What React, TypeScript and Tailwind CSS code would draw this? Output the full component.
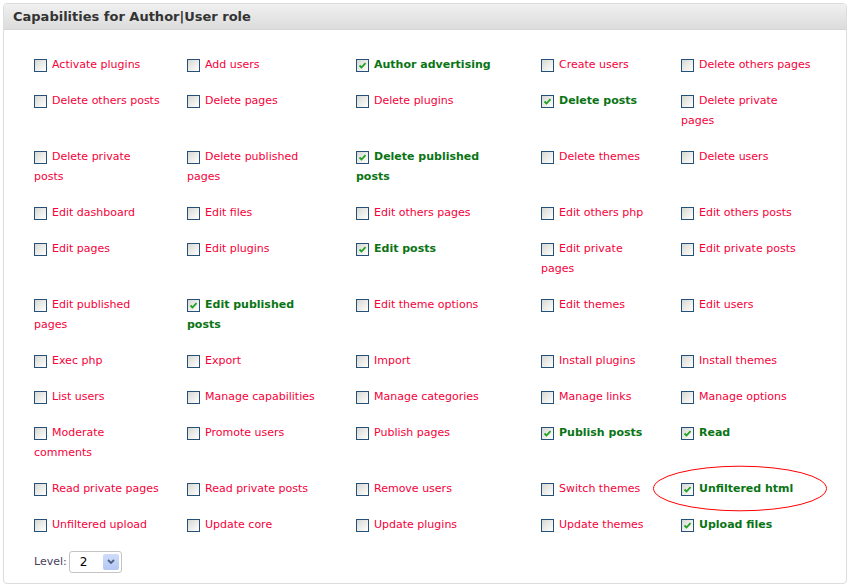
import React from 'react';

interface Cap {
  label: string;
  on?: boolean;
}

// "|" marks where the label wraps in the original table
const rows: Cap[][] = [
  [{ label: 'Activate plugins' }, { label: 'Add users' }, { label: 'Author advertising', on: true }, { label: 'Create users' }, { label: 'Delete others pages' }],
  [{ label: 'Delete others posts' }, { label: 'Delete pages' }, { label: 'Delete plugins' }, { label: 'Delete posts', on: true }, { label: 'Delete private|pages' }],
  [{ label: 'Delete private|posts' }, { label: 'Delete published|pages' }, { label: 'Delete published|posts', on: true }, { label: 'Delete themes' }, { label: 'Delete users' }],
  [{ label: 'Edit dashboard' }, { label: 'Edit files' }, { label: 'Edit others pages' }, { label: 'Edit others php' }, { label: 'Edit others posts' }],
  [{ label: 'Edit pages' }, { label: 'Edit plugins' }, { label: 'Edit posts', on: true }, { label: 'Edit private|pages' }, { label: 'Edit private posts' }],
  [{ label: 'Edit published|pages' }, { label: 'Edit published|posts', on: true }, { label: 'Edit theme options' }, { label: 'Edit themes' }, { label: 'Edit users' }],
  [{ label: 'Exec php' }, { label: 'Export' }, { label: 'Import' }, { label: 'Install plugins' }, { label: 'Install themes' }],
  [{ label: 'List users' }, { label: 'Manage capabilities' }, { label: 'Manage categories' }, { label: 'Manage links' }, { label: 'Manage options' }],
  [{ label: 'Moderate|comments' }, { label: 'Promote users' }, { label: 'Publish pages' }, { label: 'Publish posts', on: true }, { label: 'Read', on: true }],
  [{ label: 'Read private pages' }, { label: 'Read private posts' }, { label: 'Remove users' }, { label: 'Switch themes' }, { label: 'Unfiltered html', on: true }],
  [{ label: 'Unfiltered upload' }, { label: 'Update core' }, { label: 'Update plugins' }, { label: 'Update themes' }, { label: 'Upload files', on: true }],
];

function Box({ on }: { on?: boolean }) {
  return (
    <span className="inline-block w-[13px] h-[13px] mr-[5px] align-[-4px] border border-[#24507a] bg-gradient-to-br from-[#d8d8d2] to-white relative">
      {on && (
        <svg viewBox="0 0 11 11" className="absolute left-0 top-0 w-[11px] h-[11px]">
          <path d="M2.5 5.5 L4.5 7.5 L8.5 3.2" fill="none" stroke="#21a121" strokeWidth="1.8" />
        </svg>
      )}
    </span>
  );
}

function Cell({ cap }: { cap: Cap }) {
  const parts = cap.label.split('|');
  return (
    <div
      className={`py-2 leading-5 whitespace-nowrap ${cap.on ? 'font-bold text-[#0a7414]' : 'text-[#f5003a]'}`}
    >
      <Box on={cap.on} />
      {parts[0]}
      {parts[1] && (
        <>
          <br />
          {parts[1]}
        </>
      )}
    </div>
  );
}

export default function App() {
  return (
    <div className="relative w-[850px] h-[587px] bg-white pt-[3px] px-[3px] text-[11px] font-['DejaVu_Sans',Verdana,sans-serif]">
      <div className="border border-[#dcdcdc] rounded-[4px] h-[581px] flex flex-col overflow-hidden">
        <div className="h-[26px] bg-gradient-to-b from-[#f0f0f0] to-[#dcdcdc] border-b border-[#d6d6d6] pl-[9px] flex items-center">
          <h1 className="text-[13px] font-bold text-[#333]">Capabilities for Author|User role</h1>
        </div>
        <div className="pl-[30px] pt-[17px]">
          <div className="grid grid-cols-[153px_169px_185px_140px_1fr]">
            {rows.flat().map((cap, i) => (
              <Cell key={i} cap={cap} />
            ))}
          </div>
          <div className="flex items-center mt-[8px] text-[#4a4060]">
            <span>Level:</span>
            <div className="ml-[2px] w-[53px] h-[22px] border border-[#c4c4c4] rounded-[3px] flex items-center justify-between pl-[10px] pr-[2px] bg-white">
              <span className="text-black text-[12px]">2</span>
              <span className="w-[16px] h-[16px] rounded-[2px] bg-gradient-to-b from-[#cfdcfb] to-[#b4c8f5] flex items-center justify-center">
                <svg viewBox="0 0 8 6" className="w-[8px] h-[6px]">
                  <path d="M1 1 L4 4 L7 1" fill="none" stroke="#4d6185" strokeWidth="1.8" />
                </svg>
              </span>
            </div>
          </div>
        </div>
      </div>
      <svg className="absolute left-[652px] top-[465px]" width="176" height="47" viewBox="0 0 176 47">
        <ellipse cx="88" cy="23.5" rx="86.5" ry="22.3" fill="none" stroke="#ff0000" strokeWidth="1" />
      </svg>
    </div>
  );
}
